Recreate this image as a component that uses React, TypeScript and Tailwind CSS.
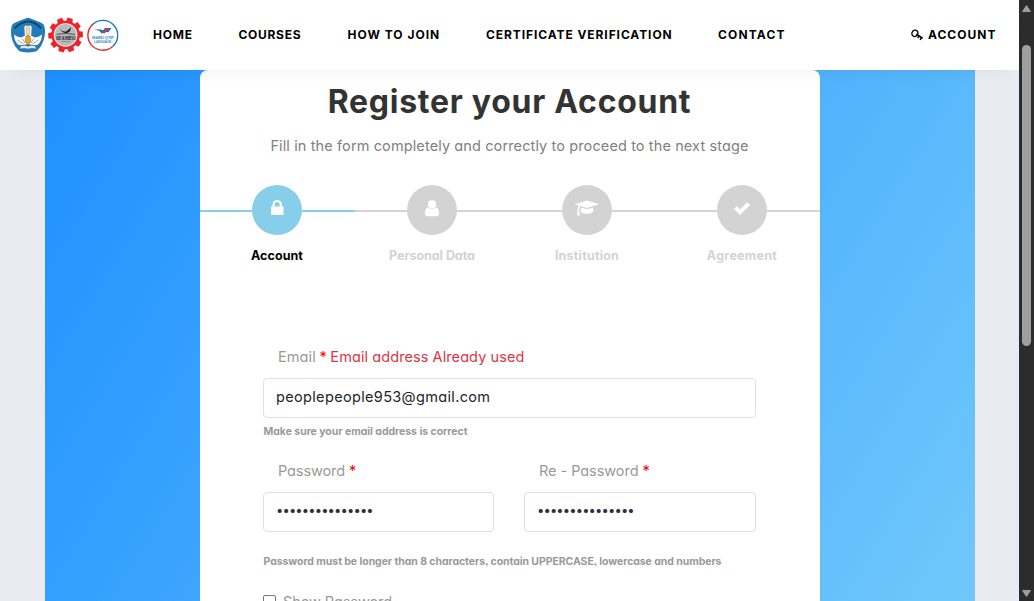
import type { ReactNode } from "react";

function EducationLogo() {
  return (
    <svg width="36" height="36" viewBox="0 0 36 36">
      <path d="M18 0.8 Q19.4 0.8 20.6 1.4 L31.8 6 Q34 7.2 34.4 9.4 Q36 16 33.6 23.4 Q31.6 29.4 27.8 33 Q26.6 34.4 24.6 34.8 Q18 36.2 11.4 34.8 Q9.4 34.4 8.2 33 Q4.4 29.4 2.4 23.4 Q0 16 1.6 9.4 Q2 7.2 4.2 6 L15.4 1.4 Q16.6 0.8 18 0.8 Z" fill="#1f7dbd" />
      <path d="M4.8 11.4 Q10 5.4 18 4.4 Q26 5.4 31.2 11.4" fill="none" stroke="#16293a" strokeWidth="1.9" strokeDasharray="1.3 0.5" />
      <path d="M4 17 Q3.4 24.4 8.6 28 Q13 29 18 27 Q23 29 27.4 28 Q32.6 24.4 32 17 Q28.6 21 24.2 20 Q20.4 17.4 18 18 Q15.6 17.4 11.8 20 Q7.4 21 4 17 Z" fill="#fff" stroke="#51626d" strokeWidth="0.4" />
      <path d="M14 10 L15.6 8 L18 9 L20.4 8 L22 10 L21.4 18.4 L19.8 20 H16.2 L14.6 18.4 Z" fill="#f3efe2" stroke="#6f7477" strokeWidth="0.5" />
      <path d="M16.5 10 V18 M18 9.8 V18 M19.5 10 V18" stroke="#a5a7a5" strokeWidth="0.5" />
      <path d="M18 17.8 Q22.4 22.4 19.8 26.2 H16.2 Q13.6 22.4 18 17.8 Z" fill="#f0a41c" stroke="#775722" strokeWidth="0.5" />
      <path d="M7.4 23 L13.6 27 M28.6 23 L22.4 27 M12.2 21.6 L15 26 M23.8 21.6 L21 26" stroke="#4e6675" strokeWidth="0.6" />
      <path d="M10.8 29.2 Q14.6 27.6 18 29.4 Q21.4 27.6 25.2 29.2 L26.2 31.8 Q21.6 30.4 18 32 Q14.4 30.4 9.8 31.8 Z" fill="#f4f2eb" stroke="#4e6675" strokeWidth="0.4" />
    </svg>
  );
}

const teeth = [0, 36, 72, 108, 144, 180, 216, 252, 288, 324];

function SeameoLogo() {
  return (
    <svg width="36" height="36" viewBox="0 0 36 36">
      {teeth.map((a) => (
        <path key={a} d="M15 0.7 H20.4 L21.2 6 H14.4 Z" fill="#ee2229" transform={`rotate(${a + 15} 17.6 18)`} />
      ))}
      <circle cx="17.6" cy="18" r="14.2" fill="#ee2229" />
      <circle cx="17.6" cy="18" r="11.8" fill="#fff" />
      <circle cx="17.6" cy="18" r="10.9" fill="#b9babc" />
      <path d="M12 11.4 Q14.4 15.4 18 14.4 Q21.6 12.4 22.6 10 Q23.4 14.4 19.6 15.8 Q14.6 17 12 11.4 Z" fill="#25272a" />
      <path d="M8.6 17.4 Q18 15.6 26.8 17.4" fill="none" stroke="#25272a" strokeWidth="0.7" />
      <text x="17.7" y="22.6" textAnchor="middle" fontSize="5.6" fontWeight="700" fontFamily="Liberation Serif, serif" fill="#111" textLength="20" lengthAdjust="spacingAndGlyphs">SEAMEO</text>
      <path d="M13.2 24.6 H22" stroke="#77797b" strokeWidth="0.7" />
    </svg>
  );
}

function LanguageLogo() {
  return (
    <svg width="32" height="36" viewBox="0 0 32 36">
      <g transform="rotate(50 15.8 18.3)" fill="none">
        <path d="M0.9 18.3 A14.9 14.9 0 0 1 30.7 18.3" stroke="#1a75ba" strokeWidth="1.3" />
        <path d="M0.9 18.3 A14.9 14.9 0 0 0 30.7 18.3" stroke="#ea2630" strokeWidth="1.4" />
      </g>
      <path d="M7.4 12.4 H13.4 Q15 12.4 15.8 13.4 L18 11 H24.4 L21.4 15.2 L16.8 15 L14.8 16.8 L12.6 14 Z" fill="#1d6fb3" />
      <path d="M15 15.8 L19.4 11 L21.6 11.6 L17.6 16.4 Z" fill="#e8323b" />
      <text x="15.8" y="22.2" textAnchor="middle" fontSize="4.4" fontWeight="700" fontFamily="Liberation Sans, sans-serif" fill="#2e87c2" textLength="22" lengthAdjust="spacingAndGlyphs">SEAMEO QITEP</text>
      <text x="15.8" y="26.2" textAnchor="middle" fontSize="4" fontWeight="700" fontFamily="Liberation Sans, sans-serif" fill="#2e87c2" textLength="17" lengthAdjust="spacingAndGlyphs">LANGUAGE</text>
    </svg>
  );
}

function KeyIcon() {
  return (
    <svg width="12" height="12" viewBox="0 0 12 12" fill="none" stroke="#000">
      <ellipse cx="3.9" cy="4.3" rx="2.9" ry="3.3" strokeWidth="1.3" transform="rotate(35 3.9 4.3)" />
      <path d="M5.4 5.2 L11.6 9.3" strokeWidth="1.6" />
      <path d="M8 7 L6.7 9 M10.4 8.6 L9.2 11" strokeWidth="1.4" />
    </svg>
  );
}

function LockIcon() {
  return (
    <svg width="26" height="18" viewBox="0 0 26 18">
      <path d="M9.6 8.5 V5.6 A3.6 3.6 0 0 1 16.8 5.6 V8.5" fill="none" stroke="#fff" strokeWidth="2.2" />
      <rect x="7" y="7.6" width="12.5" height="8.4" rx="0.9" fill="#fff" />
    </svg>
  );
}

function UserIcon() {
  return (
    <svg width="26" height="18" viewBox="0 0 26 18" fill="#fff">
      <circle cx="13" cy="5.4" r="4.1" />
      <path d="M9 8.5 Q10.6 10 13 10 Q15.4 10 17 8.5 Q20 9 20 14.2 Q20 17.2 17.2 17.2 H8.8 Q6 17.2 6 14.2 Q6 9 9 8.5 Z" />
    </svg>
  );
}

function CapIcon() {
  return (
    <svg width="26" height="18" viewBox="0 0 26 18" fill="#fff">
      <path d="M13 1.5 L25 5.2 L13 9.1 L6.6 7 Q5.3 7.5 5 9.3 Q5.7 9.9 5.2 10.9 L5.9 16.6 H3 L3.7 10.9 Q3.1 9.9 3.8 9.2 Q3.9 7.7 4.6 6.4 L1 5.2 Z" />
      <path d="M7 8.4 L13 10.3 L19 8.4 L19.4 12 Q18.4 14.7 13 14.8 Q7.6 14.7 6.6 12 Z" />
    </svg>
  );
}

function CheckIcon() {
  return (
    <svg width="26" height="18" viewBox="0 0 26 18">
      <path d="M6.4 8.6 L11.1 13.2 L19.6 4.7" fill="none" stroke="#fff" strokeWidth="4" strokeLinejoin="miter" strokeLinecap="butt" />
    </svg>
  );
}

function Step({ label, labelClass, icon, circle, line }: { label: string; labelClass: string; icon: ReactNode; circle: string; line: string }) {
  return (
    <li className="flex w-[155px] flex-col items-center">
      <div className="flex h-[50px] w-full items-center">
        <span className={`mt-[2px] h-[2px] w-[52px] ${line}`} />
        <span className={`flex h-[50px] w-[50px] justify-center rounded-full pt-[14px] ${circle}`}>{icon}</span>
        <span className={`mt-[2px] h-[2px] flex-1 ${line}`} />
      </div>
      <span className={`mt-[11px] mr-px text-[12.5px] leading-5 font-bold whitespace-nowrap ${labelClass}`}>{label}</span>
    </li>
  );
}

function PasswordField({ label, labelClass, width }: { label: string; labelClass: string; width: string }) {
  return (
    <div className={width}>
      <label className="block pl-[15px] text-[14.5px] leading-5 text-[#999]">
        <span className={labelClass}>{label}</span> <span className="text-[#f00]">*</span>
      </label>
      <div className="mt-[11px] flex h-10 items-center rounded border border-[#e1e1e1] pb-[3px] pl-3 text-[13px] tracking-[-0.86px] text-[#2c3038]">•••••••••••••••</div>
    </div>
  );
}

export default function App() {
  return (
    <div className="flex h-[601px] w-[1034px] overflow-hidden bg-[#eaebf0] font-['Inter',sans-serif] [font-feature-settings:'cv11','ss03']">
      <div className="flex h-full w-[1019px] flex-col">
        <header className="relative z-10 flex h-[70px] shrink-0 items-center bg-white pl-[9.5px] text-[12px] font-bold whitespace-nowrap text-black shadow-[0_10px_20px_-14px_rgba(0,0,0,0.11)]">
          <div className="flex w-[143.5px] items-center gap-[2.5px]">
            <EducationLogo />
            <SeameoLogo />
            <LanguageLogo />
          </div>
          <nav className="flex flex-1">
            <a className="w-[85.5px] tracking-[0.77px]">HOME</a>
            <a className="w-[109px] tracking-[0.7px]">COURSES</a>
            <a className="w-[138.5px] tracking-[1px]">HOW TO JOIN</a>
            <a className="w-[232px] tracking-[0.92px]">CERTIFICATE VERIFICATION</a>
            <a className="tracking-[1.15px]">CONTACT</a>
          </nav>
          <a className="flex w-[108px] items-center gap-[5px] tracking-[1px]"><KeyIcon />ACCOUNT</a>
        </header>

        <main className="mr-[44px] ml-[45px] h-[850px] shrink-0 bg-[linear-gradient(122deg,#1e90ff,#7dd0fa)] px-[155px]">
          <section className="h-full w-[620px] rounded-lg bg-white pt-[12px]">
            <h1 className="mr-px text-center text-[32px] leading-10 font-bold tracking-[0.72px] text-[#333]">Register your Account</h1>
            <p className="mt-[14px] mr-px text-center text-[14.5px] leading-5 tracking-[0.116px] text-[#808080]">Fill in the form completely and correctly to proceed to the next stage</p>
            <ul className="mt-[29px] flex">
              <Step label="Account" labelClass="text-black tracking-[0.07px]" icon={<LockIcon />} circle="bg-[#87ceeb]" line="bg-[#87ceeb]" />
              <Step label="Personal Data" labelClass="text-[#d3d3d3] tracking-[-0.04px]" icon={<UserIcon />} circle="bg-[#d3d3d3]" line="bg-[#d3d3d3]" />
              <Step label="Institution" labelClass="text-[#d3d3d3] tracking-[0.2px]" icon={<CapIcon />} circle="bg-[#d3d3d3]" line="bg-[#d3d3d3]" />
              <Step label="Agreement" labelClass="text-[#d3d3d3] tracking-[0.27px]" icon={<CheckIcon />} circle="bg-[#d3d3d3]" line="bg-[#d3d3d3]" />
            </ul>

            <form className="mt-[81px] px-[63px]">
              <label className="block pl-[15px] text-[14.5px] leading-5 tracking-[-0.3px] text-[#999]">
                <span className="tracking-[0.1px]">Email</span> <span className="text-[#f00]">*</span> <span className="tracking-[0.084px] text-[#dc3545]">Email address Already used</span>
              </label>
              <div className="mt-[11px] flex h-10 w-[493px] items-center rounded border border-[#e1e1e1] pb-[2px] pl-3 text-[14.5px] tracking-[0.34px] text-[#212529]">peoplepeople953@gmail.com</div>
              <p className="mt-[5px] pl-[0.5px] text-[10.5px] leading-[18px] font-bold tracking-[-0.04px] text-[#999]">Make sure your email address is correct</p>
              <div className="mt-[20px] flex w-[493px] justify-between">
                <PasswordField label="Password" labelClass="tracking-[-0.1px]" width="w-[231px]" />
                <PasswordField label="Re - Password" labelClass="tracking-[-0.05px]" width="w-[232px]" />
              </div>
              <p className="mt-[21px] pl-[0.5px] text-[10.5px] leading-[18px] font-bold tracking-[-0.068px] whitespace-nowrap text-[#999]">Password must be longer than 8 characters, contain UPPERCASE, lowercase and numbers</p>
              <label className="mt-[21px] flex gap-[7px] text-[14.5px] leading-5 tracking-[-0.08px] text-[#999]">
                <span className="mt-[3px] h-[13px] w-[13px] rounded-[2px] border border-[#767676] bg-white" />
                Show Password
              </label>
            </form>
          </section>
        </main>
      </div>

      <aside className="flex h-full w-[15px] flex-col items-center bg-[#2c2c2c]">
        <svg className="mt-[5px]" width="9" height="7" viewBox="0 0 9 7"><path d="M4.5 0.6 L8.4 6.4 H0.6 Z" fill="#9f9f9f" stroke="#9f9f9f" strokeLinejoin="round" /></svg>
        <div className="mt-[33px] h-[301px] w-[9px] rounded-full bg-[#9f9f9f]" />
        <svg className="mt-auto mb-1" width="9" height="7" viewBox="0 0 9 7"><path d="M4.5 6.4 L8.4 0.6 H0.6 Z" fill="#9f9f9f" stroke="#9f9f9f" strokeLinejoin="round" /></svg>
      </aside>
    </div>
  );
}
